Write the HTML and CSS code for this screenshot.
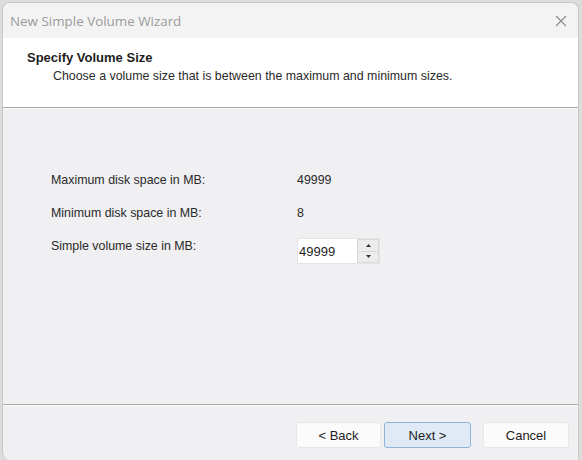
FILE: index.html
```html
<!DOCTYPE html>
<html lang="en">
<head>
    <meta charset="UTF-8">
    <title>New Simple Volume Wizard</title>
    <link rel="stylesheet" href="styles.css">
</head>
<body>
    <div class="window">
        <div class="titlebar">
            <span class="title">New Simple Volume Wizard</span>
            <svg class="close" width="12" height="12" viewBox="0 0 12 12">
                <path d="M1 1 L11 11 M11 1 L1 11" stroke="#8a8a8a" stroke-width="1.1" fill="none"/>
            </svg>
        </div>
        <div class="header">
            <div class="heading">Specify Volume Size</div>
            <div class="subheading">Choose a volume size that is between the maximum and minimum sizes.</div>
        </div>
        <div class="content">
            <div class="row">
                <span class="label">Maximum disk space in MB:</span>
                <span class="value">49999</span>
            </div>
            <div class="row">
                <span class="label">Minimum disk space in MB:</span>
                <span class="value">8</span>
            </div>
            <div class="row">
                <span class="label">Simple volume size in MB:</span>
                <div class="spin">
                    <span class="spin-text">49999</span>
                    <div class="spin-buttons">
                        <div class="spin-btn">
                            <svg width="5" height="3" viewBox="0 0 5 3"><path d="M0 3 L2.5 0 L5 3 Z" fill="#333"/></svg>
                        </div>
                        <div class="spin-btn">
                            <svg width="5" height="3" viewBox="0 0 5 3"><path d="M0 0 L2.5 3 L5 0 Z" fill="#333"/></svg>
                        </div>
                    </div>
                </div>
            </div>
        </div>
        <div class="footer">
            <button class="btn btn-back">&lt; Back</button>
            <button class="btn btn-default">Next &gt;</button>
            <button class="btn btn-cancel">Cancel</button>
        </div>
    </div>
</body>
</html>
```

FILE: styles.css
```css
html, body {
    margin: 0;
    height: 100%;
}
body {
    background-color: #dcdcdc;
    font-family: "Liberation Sans", Arial, sans-serif;
    font-size: 12.4px;
    color: #1e1e1e;
    padding: 2px 3px 0 2px;
    box-sizing: border-box;
    display: flex;
}
.window {
    flex: 1;
    display: flex;
    flex-direction: column;
    background-color: #f0eff2;
    border: 1px solid #c8c8c8;
    border-bottom: none;
    border-radius: 8px 8px 0 8px;
    overflow: hidden;
}
.titlebar {
    height: 35px;
    flex: none;
    display: flex;
    align-items: center;
    justify-content: space-between;
    padding: 0 11px 0 7px;
    background-color: #f3f3f3;
}
.title {
    font-family: "Open Sans", "Noto Sans", sans-serif;
    font-size: 13.4px;
    color: #9b9b9b;
}
.close {
    margin-top: 1px;
}
.header {
    height: 70px;
    flex: none;
    background-color: #fff;
    border-bottom: 1px solid #a9a9a9;
    box-shadow: 0 1px 0 #fbfbfb;
    padding: 12px 0 0 24px;
    box-sizing: border-box;
}
.heading {
    font-size: 13px;
    font-weight: bold;
    line-height: 16px;
}
.subheading {
    line-height: 16px;
    margin: 2px 0 0 26px;
    color: #2a2a2a;
}
.content {
    flex: 1;
    padding: 64px 0 0 48px;
    display: flex;
    flex-direction: column;
    gap: 17px;
}
.row {
    display: flex;
    align-items: center;
    height: 16px;
}
.label {
    width: 246px;
    color: #2a2a2a;
}
.value {
    color: #2a2a2a;
}
.spin {
    display: flex;
    height: 26px;
    width: 83px;
    margin-top: 10px;
    border: 1px solid #e4e4e4;
    box-sizing: border-box;
    background-color: #fff;
}
.spin-text {
    flex: 1;
    display: flex;
    align-items: center;
    padding-left: 1px;
    font-size: 13px;
}
.spin-buttons {
    width: 20px;
    display: flex;
    flex-direction: column;
    gap: 1px;
    padding: 1px;
    background-color: #d9d9d9;
}
.spin-btn {
    flex: 1;
    background-color: #ececec;
    display: flex;
    align-items: center;
    justify-content: center;
}
.footer {
    height: 56px;
    flex: none;
    box-sizing: border-box;
    border-top: 1px solid #a9a9a9;
    box-shadow: inset 0 1px 0 #fbfbfb;
    display: flex;
    justify-content: flex-end;
    align-items: flex-start;
    padding: 17px 9px 0 0;
}
.btn {
    width: 86px;
    height: 26px;
    font-family: "Liberation Sans", Arial, sans-serif;
    font-size: 13px;
    color: #1e1e1e;
    background-color: #fbfbfb;
    border: 1px solid #e6e6e6;
    border-radius: 3px;
    padding: 0;
}
.btn-back {
    width: 85px;
}
.btn-default {
    width: 87px;
    margin-left: 3px;
    background-color: #dfeaf6;
    border-color: #8fb4d8;
}
.btn-cancel {
    margin-left: 12px;
}
```
